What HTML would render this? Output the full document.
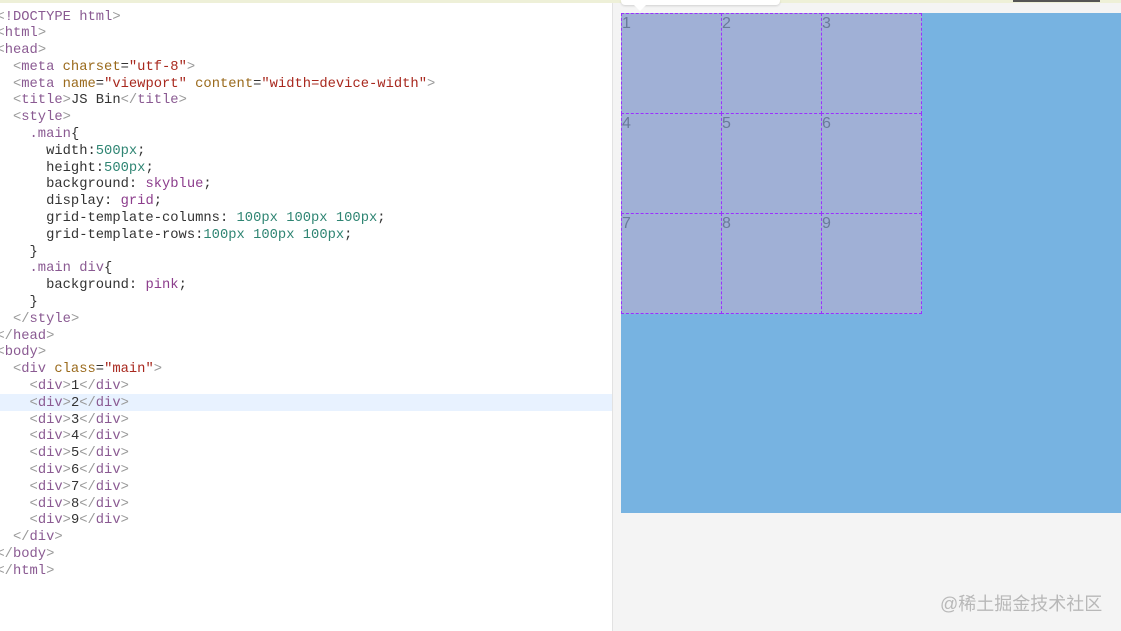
<!DOCTYPE html>
<html><head><meta charset="utf-8"><style>
body{margin:0;width:1121px;height:631px;overflow:hidden;background:#fff;position:relative;font-family:"Liberation Sans",sans-serif}
.top{position:absolute;left:0;top:0;width:1121px;height:3px;background:#eef0d8}
.code{position:absolute;left:-3.6px;top:9.5px;font-family:"Liberation Mono",monospace;font-size:13.8px;line-height:16.8px;color:#333;white-space:pre}
.hl{position:absolute;left:0;top:394px;width:612px;height:17px;background:#e8f2ff}
.t{color:#8a5a92}.b{color:#999}.a{color:#9a6a1c}.s{color:#a8281e}.n{color:#2f8573}.v{color:#8c3d8c}
.right{position:absolute;left:612px;top:3px;width:509px;height:628px;background:#f4f4f4;border-left:1px solid #e2e2e2}
.main{position:absolute;left:621px;top:13px;width:500px;height:500px;background:#77b3e1}
.cell{position:absolute;width:99px;height:99px;background:#a0b0d6;border:1px dashed #9a30ff;box-sizing:content-box;color:#6a7a9a;font-size:16px;line-height:20px}
.tip{position:absolute;left:621px;top:0;width:159px;height:5px;background:#fff;border-radius:0 0 4px 4px;box-shadow:0 1px 2px rgba(0,0,0,.15)}
.wm{position:absolute;left:940px;top:590px;color:#b8b8b8;font-size:18px;font-family:"Liberation Sans","Noto Sans CJK SC",sans-serif}
</style></head><body>
<div class="top"></div>
<div class="hl"></div>
<div class="code"><span class="b">&lt;</span><span class="t">!DOCTYPE html</span><span class="b">&gt;</span>
<span class="b">&lt;</span><span class="t">html</span><span class="b">&gt;</span>
<span class="b">&lt;</span><span class="t">head</span><span class="b">&gt;</span>
  <span class="b">&lt;</span><span class="t">meta</span> <span class="a">charset</span>=<span class="s">"utf-8"</span><span class="b">&gt;</span>
  <span class="b">&lt;</span><span class="t">meta</span> <span class="a">name</span>=<span class="s">"viewport"</span> <span class="a">content</span>=<span class="s">"width=device-width"</span><span class="b">&gt;</span>
  <span class="b">&lt;</span><span class="t">title</span><span class="b">&gt;</span>JS Bin<span class="b">&lt;/</span><span class="t">title</span><span class="b">&gt;</span>
  <span class="b">&lt;</span><span class="t">style</span><span class="b">&gt;</span>
    <span class="t">.main</span>{
      width:<span class="n">500px</span>;
      height:<span class="n">500px</span>;
      background: <span class="v">skyblue</span>;
      display: <span class="v">grid</span>;
      grid-template-columns: <span class="n">100px 100px 100px</span>;
      grid-template-rows:<span class="n">100px 100px 100px</span>;
    }
    <span class="t">.main div</span>{
      background: <span class="v">pink</span>;
    }
  <span class="b">&lt;/</span><span class="t">style</span><span class="b">&gt;</span>
<span class="b">&lt;/</span><span class="t">head</span><span class="b">&gt;</span>
<span class="b">&lt;</span><span class="t">body</span><span class="b">&gt;</span>
  <span class="b">&lt;</span><span class="t">div</span> <span class="a">class</span>=<span class="s">"main"</span><span class="b">&gt;</span>
    <span class="b">&lt;</span><span class="t">div</span><span class="b">&gt;</span>1<span class="b">&lt;/</span><span class="t">div</span><span class="b">&gt;</span>
    <span class="b">&lt;</span><span class="t">div</span><span class="b">&gt;</span>2<span class="b">&lt;/</span><span class="t">div</span><span class="b">&gt;</span>
    <span class="b">&lt;</span><span class="t">div</span><span class="b">&gt;</span>3<span class="b">&lt;/</span><span class="t">div</span><span class="b">&gt;</span>
    <span class="b">&lt;</span><span class="t">div</span><span class="b">&gt;</span>4<span class="b">&lt;/</span><span class="t">div</span><span class="b">&gt;</span>
    <span class="b">&lt;</span><span class="t">div</span><span class="b">&gt;</span>5<span class="b">&lt;/</span><span class="t">div</span><span class="b">&gt;</span>
    <span class="b">&lt;</span><span class="t">div</span><span class="b">&gt;</span>6<span class="b">&lt;/</span><span class="t">div</span><span class="b">&gt;</span>
    <span class="b">&lt;</span><span class="t">div</span><span class="b">&gt;</span>7<span class="b">&lt;/</span><span class="t">div</span><span class="b">&gt;</span>
    <span class="b">&lt;</span><span class="t">div</span><span class="b">&gt;</span>8<span class="b">&lt;/</span><span class="t">div</span><span class="b">&gt;</span>
    <span class="b">&lt;</span><span class="t">div</span><span class="b">&gt;</span>9<span class="b">&lt;/</span><span class="t">div</span><span class="b">&gt;</span>
  <span class="b">&lt;/</span><span class="t">div</span><span class="b">&gt;</span>
<span class="b">&lt;/</span><span class="t">body</span><span class="b">&gt;</span>
<span class="b">&lt;/</span><span class="t">html</span><span class="b">&gt;</span></div>
<div class="right"></div>
<div class="main"></div>
<div class="cell" style="left:621px;top:13px">1</div>
<div class="cell" style="left:721px;top:13px">2</div>
<div class="cell" style="left:821px;top:13px">3</div>
<div class="cell" style="left:621px;top:113px">4</div>
<div class="cell" style="left:721px;top:113px">5</div>
<div class="cell" style="left:821px;top:113px">6</div>
<div class="cell" style="left:621px;top:213px">7</div>
<div class="cell" style="left:721px;top:213px">8</div>
<div class="cell" style="left:821px;top:213px">9</div>
<div class="tip"></div>
<div style="position:absolute;left:633px;top:4px;width:0;height:0;border-left:7px solid transparent;border-right:7px solid transparent;border-top:7px solid #fff"></div>
<div style="position:absolute;left:1013px;top:0;width:87px;height:2px;background:#555"></div>
<div class="wm">@稀土掘金技术社区</div>
</body></html>
